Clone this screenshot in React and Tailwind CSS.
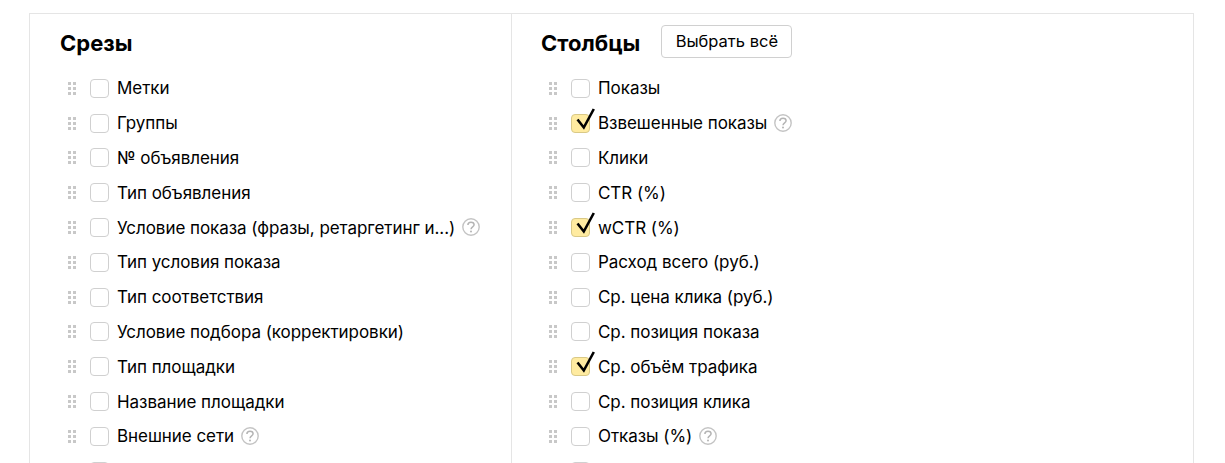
const SLICES = [
  { label: 'Метки' },
  { label: 'Группы' },
  { label: '№ объявления' },
  { label: 'Тип объявления' },
  { label: 'Условие показа (фразы, ретаргетинг и...)', help: true },
  { label: 'Тип условия показа' },
  { label: 'Тип соответствия' },
  { label: 'Условие подбора (корректировки)' },
  { label: 'Тип площадки' },
  { label: 'Название площадки' },
  { label: 'Внешние сети', help: true },
  { label: '' },
]

const COLUMNS = [
  { label: 'Показы' },
  { label: 'Взвешенные показы', checked: true, help: true },
  { label: 'Клики' },
  { label: 'CTR (%)' },
  { label: 'wCTR (%)', checked: true },
  { label: 'Расход всего (руб.)' },
  { label: 'Ср. цена клика (руб.)' },
  { label: 'Ср. позиция показа' },
  { label: 'Ср. объём трафика', checked: true },
  { label: 'Ср. позиция клика' },
  { label: 'Отказы (%)', help: true },
  { label: '' },
]

function DragHandle() {
  return (
    <span className="grid grid-cols-2 gap-x-[2px] gap-y-[2px] w-[8px] shrink-0">
      {[0, 1, 2, 3, 4, 5].map(i => (
        <span key={i} className="w-[3px] h-[3px] bg-[#c8c8c8]" />
      ))}
    </span>
  )
}

function Checkbox({ checked }) {
  return (
    <span
      className={`relative w-[19px] h-[19px] shrink-0 rounded-[4px] border ${
        checked ? 'bg-[#ffeba0] border-[#d9c987]' : 'bg-white border-[#d0d0d0]'
      }`}
    >
      {checked && (
        <svg className="absolute left-[1px] top-[-7px] overflow-visible" width="24" height="24" viewBox="0 0 24 24" fill="none">
          <path d="M4.5 11.5L10.8 19.5L20.8 1" stroke="#000" strokeWidth="2.6" />
        </svg>
      )}
    </span>
  )
}

function HelpIcon() {
  return (
    <svg className="ml-[7px] shrink-0 -mt-[1px]" width="18" height="18" viewBox="0 0 18 18" fill="none">
      <circle cx="9" cy="9" r="8.2" stroke="#c4c4c4" strokeWidth="1.4" />
      <path d="M5.9 7C5.9 5.2 7.2 4.2 9 4.2C10.8 4.2 12.1 5.3 12.1 6.8C12.1 8.8 9 8.9 9 11.2" stroke="#b4b4b4" strokeWidth="1.5" />
      <circle cx="9" cy="13.6" r="1" fill="#b4b4b4" />
    </svg>
  )
}

function Row({ item }) {
  return (
    <li className="h-[34.8px] flex items-center">
      <DragHandle />
      <span className="ml-[14px] flex items-center">
        <Checkbox checked={item.checked} />
      </span>
      <span className="ml-[8px] text-[17px] leading-[20px] tracking-[-0.05px] text-black whitespace-nowrap">{item.label}</span>
      {item.help && <HelpIcon />}
    </li>
  )
}

export default function App() {
  return (
    <div className="h-[463px] overflow-hidden bg-white font-['Inter','Liberation_Sans',sans-serif]">
      <div className="ml-[29px] w-[1165px] h-[463px] border-x border-[#e5e5e5]">
        <div className="mt-[13px] border-t border-[#e5e5e5] flex h-[450px]">
          <section className="w-[482px] pl-[30px] pt-[11px] border-r border-[#e5e5e5]">
            <div className="h-[37px] flex items-start">
              <h2 className="text-[22px] leading-[36px] font-bold text-black">Срезы</h2>
            </div>
            <ul className="ml-[8px] mt-[9px]">
              {SLICES.map((item, i) => <Row key={i} item={item} />)}
            </ul>
          </section>
          <section className="flex-1 pl-[29px] pt-[11px]">
            <div className="h-[37px] flex items-start gap-[21px]">
              <h2 className="text-[22px] leading-[36px] font-bold text-black">Столбцы</h2>
              <button className="h-[33px] w-[131px] rounded-[4px] border border-[#d0d0d0] bg-white text-[16.5px] text-black">
                Выбрать всё
              </button>
            </div>
            <ul className="ml-[8px] mt-[9px]">
              {COLUMNS.map((item, i) => <Row key={i} item={item} />)}
            </ul>
          </section>
        </div>
      </div>
    </div>
  )
}
